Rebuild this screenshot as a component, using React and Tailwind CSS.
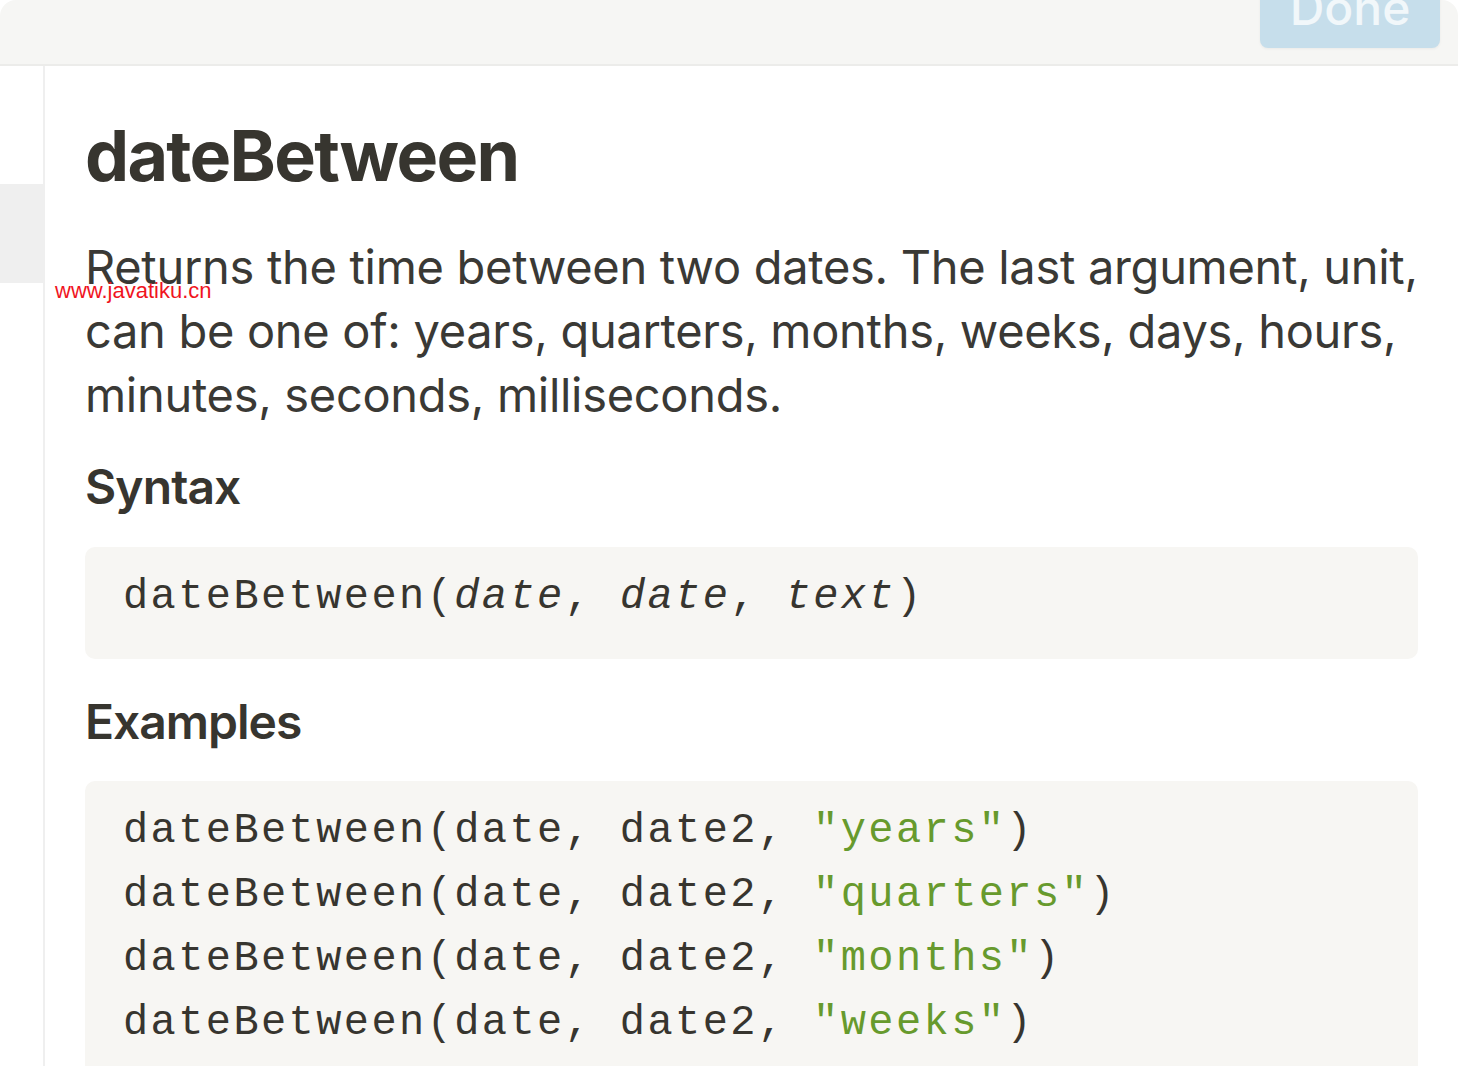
import React from 'react';

const sans = { fontFamily: 'Inter, "Noto Sans", sans-serif' };

const examples = ['years', 'quarters', 'months', 'weeks'];

const CodeBlock = ({ children, className = '' }) => (
  <div
    className={`rounded-[10px] bg-[#f7f6f3] pl-[38px] pr-6 text-[42px] leading-[64px] tracking-[2.4px] text-[#37352f] ${className}`}
    style={{ fontFamily: '"Liberation Mono", "DejaVu Sans Mono", monospace' }}
  >
    {children}
  </div>
);

export default function App() {
  return (
    <div className="relative flex h-[1066px] w-[1458px] flex-col overflow-hidden bg-white" style={sans}>
      {/* header */}
      <div className="flex h-[66px] shrink-0 items-start justify-end overflow-hidden rounded-t-[16px] border-b-2 border-[#ececea] bg-[#f6f6f4] pr-[18px]">
        <button className="-mt-[32px] flex h-[80px] w-[180px] items-center justify-center rounded-[8px] bg-[#c6deeb] text-[48px] font-medium text-[#f1f7fa] shadow-[0_1px_3px_rgba(0,0,0,0.05)]">
          Done
        </button>
      </div>

      <div className="flex min-h-0 flex-1">
        {/* sidebar strip */}
        <div className="flex w-[45px] shrink-0 flex-col border-r-2 border-[#efefef]">
          <div className="h-[118px]" />
          <div className="h-[99px] bg-[#efefef]" />
        </div>

        {/* content */}
        <div className="flex-1 pl-[40px] pr-[40px] pt-[48px] text-[#37352f]">
          <h1 className="text-[70px] font-bold leading-[84px] tracking-[-1.7px]">dateBetween</h1>

          <p className="mt-[37px] text-[47px] leading-[64px] tracking-[-0.3px] text-[#3a3935]">
            Returns the time between two dates. The last argument, unit, can be one of: years, quarters, months, weeks, days, hours, minutes, seconds, milliseconds.
          </p>

          <h2 className="mt-[28px] text-[48px] font-semibold leading-[64px] tracking-[-0.9px]">Syntax</h2>
          <CodeBlock className="mt-[28px] h-[112px] pt-[18px]">
            dateBetween(<span className="italic">date</span>, <span className="italic">date</span>, <span className="italic">text</span>)
          </CodeBlock>

          <h2 className="mt-[31px] text-[48px] font-semibold leading-[64px] tracking-[-1px]">Examples</h2>
          <CodeBlock className="mt-[27px] pb-[60px] pt-[18px]">
            {examples.map((u) => (
              <div key={u} className="whitespace-pre">
                dateBetween(date, date2, <span className="text-[#679a2d]">"{u}"</span>)
              </div>
            ))}
          </CodeBlock>
        </div>
      </div>

      {/* watermark */}
      <div
        className="absolute left-[55px] top-[278px] text-[22px] leading-[26px] text-[#f0141e]"
        style={{ fontFamily: '"Liberation Sans", Arial, sans-serif' }}
      >
        www.javatiku.cn
      </div>
    </div>
  );
}
